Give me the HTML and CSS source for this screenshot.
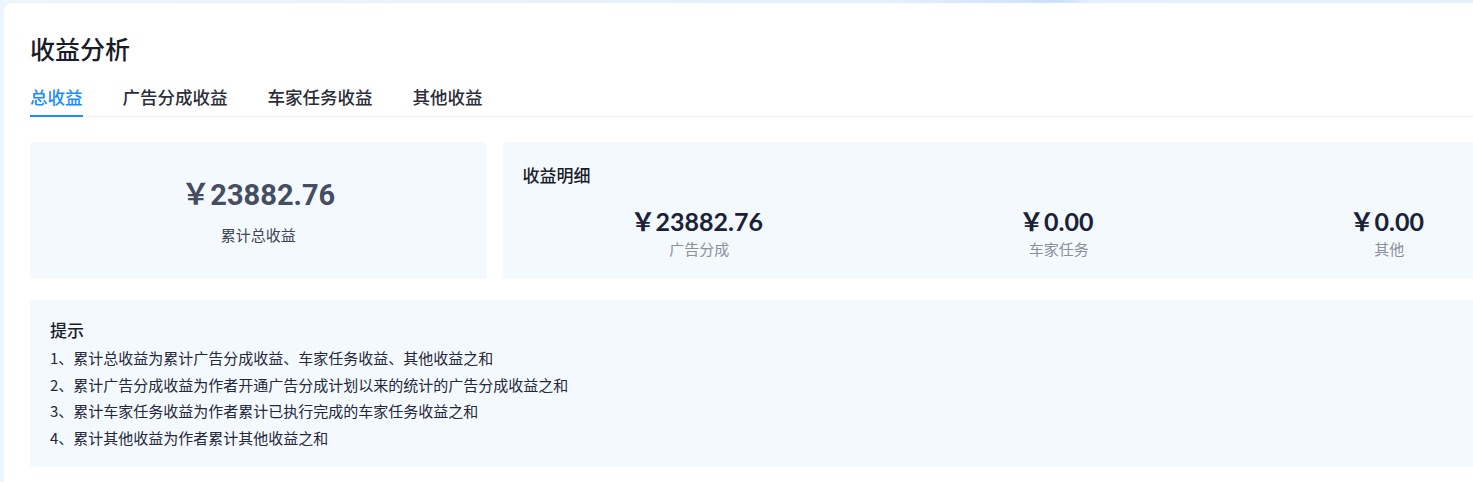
FILE: index.html
```html
<!DOCTYPE html>
<html lang="zh-CN">
<head>
    <meta charset="UTF-8">
    <meta name="viewport" content="width=device-width, initial-scale=1.0">
    <title>收益分析</title>
    <link rel="stylesheet" href="styles.css">
</head>
<body>
    <div class="page">
        <h1 class="page-title">收益分析</h1>

        <div class="tabs">
            <div class="tab active">总收益</div>
            <div class="tab">广告分成收益</div>
            <div class="tab">车家任务收益</div>
            <div class="tab">其他收益</div>
        </div>

        <div class="summary">
            <div class="card total-card">
                <div class="total-value">￥23882.76</div>
                <div class="total-label">累计总收益</div>
            </div>
            <div class="card detail-card">
                <h2 class="detail-title">收益明细</h2>
                <div class="detail-row">
                    <div class="detail-item">
                        <div class="detail-value">￥23882.76</div>
                        <div class="detail-label">广告分成</div>
                    </div>
                    <div class="detail-item">
                        <div class="detail-value">￥0.00</div>
                        <div class="detail-label">车家任务</div>
                    </div>
                    <div class="detail-item">
                        <div class="detail-value">￥0.00</div>
                        <div class="detail-label">其他</div>
                    </div>
                </div>
            </div>
        </div>

        <div class="card tips">
            <h3 class="tips-title">提示</h3>
            <p>1、累计总收益为累计广告分成收益、车家任务收益、其他收益之和</p>
            <p>2、累计广告分成收益为作者开通广告分成计划以来的统计的广告分成收益之和</p>
            <p>3、累计车家任务收益为作者累计已执行完成的车家任务收益之和</p>
            <p>4、累计其他收益为作者累计其他收益之和</p>
        </div>
    </div>
</body>
</html>
```

FILE: styles.css
```css
body {
    margin: 0;
    padding: 0;
    overflow: hidden;
    font-family: "Noto Sans CJK SC", "Noto Sans", sans-serif;
    color: #1d1f2b;
    background: linear-gradient(to right, #edf5ff 0, #e4f0fe 60%, #cbe0fb 72%, #e2effe 74%, #e6f1fe 100%);
}

.page {
    width: 1522px;
    margin: 3px 0 0 4px;
    padding: 28px 26px 20px;
    background-color: #fff;
    border-radius: 8px 0 0 0;
    min-height: 500px;
}

.page-title {
    margin: 0;
    font-size: 25px;
    line-height: 34px;
    font-weight: 500;
    color: #1a1c28;
}

.tabs {
    display: flex;
    gap: 40px;
    margin-top: 20px;
    border-bottom: 1px solid #eef0f4;
}

.tab {
    font-size: 17.5px;
    line-height: 24px;
    font-weight: 500;
    color: #2b2e38;
    padding-bottom: 6px;
    border-bottom: 2px solid transparent;
    margin-bottom: -1px;
}

.tab.active {
    color: #1a8cff;
    border-bottom-color: #1a8cff;
}

.summary {
    display: flex;
    gap: 16px;
    margin-top: 25px;
}

.card {
    background-color: #f4f9fe;
    border-radius: 4px;
}

.total-card {
    flex: 0 0 30%;
    height: 137px;
    display: flex;
    flex-direction: column;
    align-items: center;
    justify-content: center;
}

.total-value {
    font-family: Roboto, "Noto Sans CJK SC", sans-serif;
    font-size: 29px;
    line-height: 38px;
    font-weight: 700;
    color: #454d63;
}

.total-label {
    margin-top: 11px;
    font-size: 15px;
    line-height: 20px;
    color: #3c4456;
}

.detail-card {
    flex: 1;
    padding: 21px 0 20px;
}

.detail-title {
    margin: 0 0 19px 20px;
    font-size: 17px;
    line-height: 24px;
    font-weight: 500;
    color: #1b1d2c;
}

.detail-row {
    display: flex;
    justify-content: space-around;
}

.detail-item {
    text-align: center;
}

.detail-value {
    font-family: Lato, "Noto Sans CJK SC", sans-serif;
    font-size: 25px;
    line-height: 30px;
    font-weight: 700;
    color: #1a2238;
}

.detail-label {
    margin-top: 3px;
    padding-left: 5px;
    font-size: 15px;
    line-height: 20px;
    color: #8b909c;
}

.tips {
    margin-top: 21px;
    padding: 19px 20px 16px;
}

.tips-title {
    margin: 0 0 4px;
    font-size: 17px;
    line-height: 22px;
    font-weight: 500;
    color: #1b1d2c;
}

.tips p {
    margin: 0;
    font-size: 15px;
    line-height: 26.5px;
    color: #23283a;
}
```
